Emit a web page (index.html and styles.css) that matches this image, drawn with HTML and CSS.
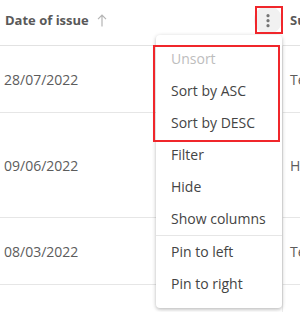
FILE: index.html
```html
<!DOCTYPE html>
<html>
<head>
<meta charset="utf-8">
<link rel="stylesheet" href="styles.css">
</head>
<body>
<div class="viewport">
  <div class="grid">
    <div class="cell head first">
      <span class="head-label">Date of issue</span>
      <svg class="sort-arrow" width="10" height="13" viewBox="0 0 10 13"><path d="M5 12.5V1.2M1 5.2L5 1.2L9 5.2" fill="none" stroke="#b5b5b5" stroke-width="1.2"/></svg>
      <span class="spacer"></span>
      <span class="kebab">
        <svg width="28" height="28" viewBox="0 0 28 28"><circle cx="14" cy="9.7" r="1.6" fill="#757575"/><circle cx="14" cy="14.7" r="1.6" fill="#757575"/><circle cx="14" cy="19.7" r="1.6" fill="#757575"/></svg>
      </span>
    </div>
    <div class="cell head second"><span class="head-label">Subject</span></div>

    <div class="cell first row-short">28/07/2022</div>
    <div class="cell second row-short">Test payment</div>

    <div class="cell first row-tall">09/06/2022</div>
    <div class="cell second row-tall">Hello world</div>

    <div class="cell first row-short">08/03/2022</div>
    <div class="cell second row-short">Test invoice</div>

    <div class="cell first row-end"></div>
    <div class="cell second row-end"></div>
  </div>

  <div class="menu">
    <div class="item disabled">Unsort</div>
    <div class="item">Sort by ASC</div>
    <div class="item">Sort by DESC</div>
    <div class="item">Filter</div>
    <div class="item">Hide</div>
    <div class="item">Show columns</div>
    <div class="divider"></div>
    <div class="item">Pin to left</div>
    <div class="item">Pin to right</div>
  </div>

  <div class="mark mark-kebab"></div>
  <div class="mark mark-sort"></div>
</div>
</body>
</html>
```

FILE: styles.css
```css
html, body {
  margin: 0;
  padding: 0;
  background: #fff;
}

.viewport {
  position: relative;
  width: 300px;
  height: 312px;
  overflow: hidden;
  font-family: "Open Sans", "Noto Sans", sans-serif;
  font-size: 14px;
  color: #5c5c5c;
}

.grid {
  display: grid;
  grid-template-columns: 283px 200px;
  width: 483px;
}

.cell {
  display: flex;
  align-items: center;
  box-sizing: border-box;
  border-bottom: 1px solid #e6e6e6;
  white-space: nowrap;
}

.cell.first {
  padding-left: 4px;
  border-right: 1px solid #ececec;
}

.cell.second {
  padding-left: 7px;
}

.head {
  height: 46px;
  padding-bottom: 5px;
  border-bottom-color: #e2e2e2;
}

.head.first {
  padding-left: 5px;
  border-right-color: transparent;
}

.head-label {
  font-size: 13px;
  font-weight: 700;
  color: #595959;
}

.sort-arrow {
  margin-left: 8px;
  margin-top: 1px;
}

.spacer {
  flex: 1;
}

.kebab {
  width: 28px;
  height: 28px;
  border-radius: 50%;
  background: #f1f1f1;
  display: flex;
}

.row-short {
  height: 67px;
}

.row-tall {
  height: 105px;
}

.row-end {
  height: 40px;
  border-bottom: none;
}

.menu {
  position: absolute;
  left: 156px;
  top: 35px;
  width: 126px;
  padding: 8px 0;
  background: #fff;
  border-radius: 4px;
  box-shadow: 0 1px 4px rgba(0, 0, 0, 0.22), 0 2px 3px rgba(0, 0, 0, 0.08);
}

.item {
  height: 32px;
  line-height: 32px;
  padding-left: 15px;
  color: #444;
  white-space: nowrap;
}

.item.disabled {
  color: #bdbdbd;
}

.divider {
  height: 1px;
  background: #e6e6e6;
}

.mark {
  position: absolute;
  box-sizing: border-box;
  border: 2px solid #f0262b;
}

.mark-kebab {
  left: 255px;
  top: 6px;
  width: 28px;
  height: 28px;
}

.mark-sort {
  left: 153px;
  top: 45px;
  width: 127px;
  height: 97px;
}
```
